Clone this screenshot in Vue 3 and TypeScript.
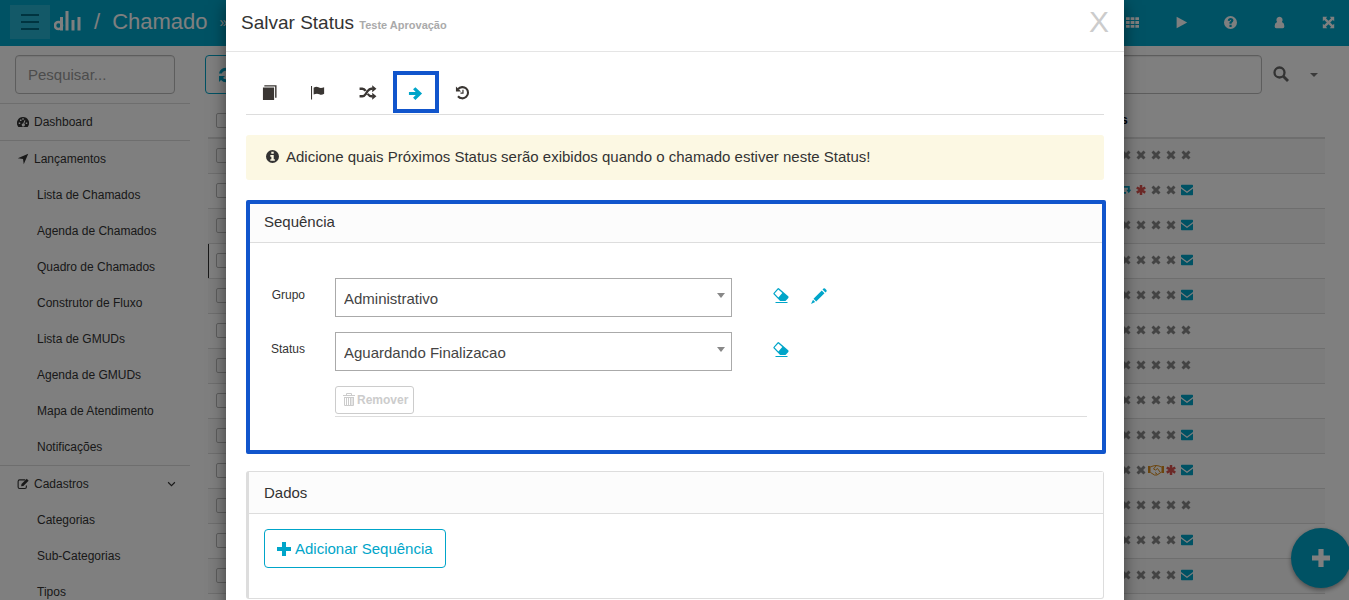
<script setup lang="ts">
import { ref } from 'vue'

type Mark = 'x' | 'star' | 'mail' | 'move' | 'shake'

interface MenuItem {
  label: string
  icon?: string
  open?: boolean
}

const menu: MenuItem[] = [
  { label: 'Dashboard', icon: 'dash' },
  { label: 'Lançamentos', icon: 'plane' },
  { label: 'Lista de Chamados' },
  { label: 'Agenda de Chamados' },
  { label: 'Quadro de Chamados' },
  { label: 'Construtor de Fluxo' },
  { label: 'Lista de GMUDs' },
  { label: 'Agenda de GMUDs' },
  { label: 'Mapa de Atendimento' },
  { label: 'Notificações' },
  { label: 'Cadastros', icon: 'edit', open: true },
  { label: 'Categorias' },
  { label: 'Sub-Categorias' },
  { label: 'Tipos' },
]

const none: Mark[] = ['x', 'x', 'x', 'x', 'x', 'x', 'x']
const mailed: Mark[] = ['x', 'x', 'x', 'x', 'x', 'x', 'mail']
const rows: Mark[][] = [
  none,
  ['x', 'x', 'move', 'star', 'x', 'x', 'mail'],
  mailed,
  mailed,
  mailed,
  none,
  none,
  mailed,
  mailed,
  ['x', 'x', 'x', 'x', 'shake', 'star', 'mail'],
  none,
  mailed,
  mailed,
  mailed,
]

const paths: Record<string, string> = {
  x: 'M4 .8 8 4.6 12 .8 15.200 4 11.400 8 15.200 12 12 15.200 8 11.400 4 15.200 .8 12 4.600 8 .8 4z',
  star: 'M6 0h4v4.500L13.800 2.200l2 3.500L12 8l3.800 2.300-2 3.500-3.800-2.300V16H6v-4.500L2.200 13.800l-2-3.500L4 8 .2 5.700l2-3.500L6 4.500z',
  mail: 'M0 2Q0 1 1 1H15Q16 1 16 2V4L8 10 0 4zM0 6 8 12 16 6V14Q16 15 15 15H1Q0 15 0 14z',
  move: 'M0 1.500H14V7.500H16.500L12.500 13 8.500 7.500H11V4.500H0zM0 11H8V14H0z',
  dash: 'M8 1.500A8 8 0 0 0 1.300 14Q1.600 14.500 2 14.500H14Q14.400 14.500 14.700 14A8 8 0 0 0 8 1.500M2.300 8.500h2v2h-2zM4 4.500h2v2H4zM7 3h2v2H7zM11.700 8.500h2v2h-2zM9.900 5.500l1.300.5-1.600 4.300a2 2 0 1 1-1.300-.4z',
  plane: 'M15 1 9 15 8 8 1 7z',
  book: 'M2.500 .3H15.500V13.500H14V1.600H2.500zM1 2.700H12.900V16H1z',
  flag: 'M0 .5H1.200V16H0zM3 2.500Q6 .5 8.500 2T15 2V9.500Q12 11.500 9.500 10T3 10.200z',
  arrow: 'M1 6.400H8.200L5.400 3.500 7.900 1.200 15 8 7.900 14.800 5.400 12.500 8.200 9.600H1z',
  info: 'M8 0a8 8 0 1 0 0 16A8 8 0 0 0 8 0M6.500 2.300h3v2.400h-3zM5.300 6.300h4.200v5h1.400v2H5.300v-2h1.300v-3H5.300z',
  plus: 'M5.700 0h4.600v5.700H16v4.600h-5.700V16H5.700v-5.700H0V5.700h5.700z',
  grid: 'M0 1.500h4.500v3.500H0zM5.700 1.500h4.600v3.500H5.700zM11.500 1.500H16v3.500h-4.500zM0 6.300h4.500v3.500H0zM5.700 6.300h4.600v3.500H5.700zM11.500 6.300H16v3.500h-4.500zM0 11h4.500v3.500H0zM5.700 11h4.600v3.500H5.700zM11.500 11H16v3.500h-4.500z',
  play: 'M2 1 15 8 2 15z',
  help: 'M8 0a8 8 0 1 0 0 16A8 8 0 0 0 8 0M4.600 5.800Q5 2.600 8.200 2.600 11.600 2.800 11.600 5.600 11.500 7.300 9.400 8.500V9.500H6.700V7.500L8.800 5.900Q8.900 4.900 8 4.900 7.200 5 7 6.300zM6.700 10.800h2.700v2.600H6.700z',
  user: 'M8 1a3.900 3.900 0 0 1 3 6.300Q14 8.500 14 12.500 14 15 12 15H4Q2 15 2 12.500 2 8.500 5 7.300A3.900 3.900 0 0 1 8 1',
  expand: 'M1 1H6.500L4.800 2.700 8 5.900 11.200 2.700 9.500 1H15V6.500L13.300 4.800 10.100 8 13.300 11.200 15 9.500V15H9.500L11.200 13.300 8 10.100 4.800 13.300 6.500 15H1V9.500L2.700 11.200 5.900 8 2.700 4.800 1 6.500z',
  refresh: 'M1 6.500A7 7 0 0 1 13 3L15 1V7H9L11 5A4.500 4.500 0 0 0 3.700 6.500zM15 9.500A7 7 0 0 1 3 13L1 15V9H7L5 11A4.500 4.500 0 0 0 12.300 9.500z',
  pencil: 'M11.500 1.500 12.500.5Q13.200 0 14 .6L15.400 2Q16 2.800 15.500 3.500L14.500 4.500zM10.800 2.500 13.500 5.200 5.200 13.500 2.500 10.800zM2 11.800 4.200 14 0 16z',
  eraser: 'M5.300 0Q5.800 0 6.200 .4L15.200 8.200Q16 9 15.300 10L13 12.500Q12.500 13 11.800 13H8Q7.200 13 6.600 12.400L.6 6.300Q0 5.600 .6 4.900L4.500 .4Q4.900 0 5.300 0M5.300 1.500 1.600 5.600 5.400 9.400 9.300 5z',
  line: 'M2.500 14H14.500V15H2.500z',
}

const tools = ['grid', 'play', 'help', 'user', 'expand']
const group = ref('Administrativo')
const status = ref('Aguardando Finalizacao')
const search = ref('')
const filter = ref('')
</script>

<template>
  <div class="app">
    <div class="page" inert>
      <header class="topbar">
        <button class="burger" aria-label="Menu"><span></span><span></span><span></span></button>
        <svg class="brand" viewBox="0 0 27 20" aria-label="Logo">
          <circle cx="4.500" cy="14.500" r="3.500" fill="none" stroke="#fff" stroke-width="2.600" />
          <path d="M7.500 6V19.500M13 0V19.500M19 9V19.500M25 6V19.500" fill="none" stroke="#fff" stroke-width="3" />
        </svg>
        <span class="slash">/</span>
        <h1>Chamado</h1>
        <span class="crumb">»</span>
        <nav class="tools">
          <button v-for="t in tools" :key="t" :aria-label="t">
            <svg viewBox="0 0 16 16"><path fill-rule="evenodd" :d="paths[t]" /></svg>
          </button>
        </nav>
      </header>
      <div class="columns">
        <aside>
          <input v-model="search" class="field" placeholder="Pesquisar..." aria-label="Pesquisar" />
          <nav class="menu">
            <a v-for="m in menu" :key="m.label" href="#" :class="{ head: m.icon }">
              <svg v-if="m.icon === 'edit'" viewBox="0 0 16 16">
                <path d="M11 2.500H3.500Q1.500 2.500 1.500 4.500V12Q1.500 14 3.500 14H10.500Q12.500 14 12.500 12V10" fill="none" stroke="currentColor" stroke-width="1.500" />
                <path d="M13 1 15.500 3.500 8.500 10.500 5.500 11 6 8z" />
              </svg>
              <svg v-else-if="m.icon" viewBox="0 0 16 16"><path fill-rule="evenodd" :d="paths[m.icon]" /></svg>
              <span>{{ m.label }}</span>
              <svg v-if="m.open" class="chev" viewBox="0 0 8 8"><path d="M1 2 4 5 7 2" fill="none" stroke="currentColor" stroke-width="1" /></svg>
            </a>
          </nav>
        </aside>
        <main>
          <div class="filters">
            <button class="reload" aria-label="Atualizar"><svg viewBox="0 0 16 16"><path :d="paths.refresh" /></svg></button>
            <input v-model="filter" class="field" aria-label="Filtro" />
            <button class="find" aria-label="Buscar">
              <svg viewBox="0 0 16 16"><circle cx="6.500" cy="6.500" r="5" fill="none" stroke="currentColor" stroke-width="2.300" /><path d="M10 10 15 15" stroke="currentColor" stroke-width="2.800" /></svg>
            </button>
            <button class="more" aria-label="Mais"><i class="caret"></i></button>
          </div>
          <table>
            <thead>
              <tr>
                <th><input type="checkbox" aria-label="Todos" /></th>
                <th class="marks">Status</th>
              </tr>
            </thead>
            <tbody>
              <tr v-for="(r, i) in rows" :key="i" :class="{ current: i === 3 }">
                <td><input type="checkbox" :aria-label="'Linha ' + (i + 1)" /></td>
                <td class="marks">
                  <div>
                    <template v-for="(k, j) in r" :key="j">
                      <svg v-if="k === 'shake'" class="shake" viewBox="0 0 16 12">
                        <path d="M0 2H2.500V9H0zM13.500 2H16V9H13.500z" />
                        <path d="M2.500 3 5 2 8 1.500 11 2 13.500 3M2.500 8.500 6.500 11H9L13.500 8M8 2 5.500 5 7.500 6 9.500 4.500 12 8M7 8.500 9 10" fill="none" stroke="currentColor" stroke-width="1" />
                      </svg>
                      <svg v-else :class="k" viewBox="0 0 16 16"><path :d="paths[k]" /></svg>
                    </template>
                  </div>
                </td>
              </tr>
            </tbody>
          </table>
        </main>
      </div>
      <button class="fab" aria-label="Novo"><svg viewBox="0 0 16 16"><path :d="paths.plus" /></svg></button>
    </div>

    <div class="backdrop">
      <section class="modal" role="dialog" aria-labelledby="dialog-title">
        <header class="modal-head">
          <h2 id="dialog-title">Salvar Status <small>Teste Aprovação</small></h2>
          <button class="close" aria-label="Fechar">X</button>
        </header>
        <div class="modal-body">
          <nav class="tabs">
            <button aria-label="Dados"><svg viewBox="0 0 16 16"><path :d="paths.book" /></svg></button>
            <button aria-label="Sinalização"><svg class="flag" viewBox="0 0 16 16"><path :d="paths.flag" /></svg></button>
            <button aria-label="Fluxo">
              <svg class="wide" viewBox="0 0 18 16">
                <path d="M0 4H3Q5 4 6.500 6.300M8.700 9.500Q10.500 12 12.500 12H14M0 12H3Q5 12 6.500 9.700L8.700 6.300Q10.500 4 12.500 4H14" fill="none" stroke="currentColor" stroke-width="2.500" />
                <path d="M13.500 .2 18 4 13.500 7.800zM13.500 8.200 18 12 13.500 15.800z" />
              </svg>
            </button>
            <button class="active" aria-label="Próximos"><svg viewBox="0 0 16 16"><path :d="paths.arrow" /></svg></button>
            <button aria-label="Histórico">
              <svg viewBox="0 0 16 16"><path d="M3.200 4.500A6 6 0 1 1 3.200 12" fill="none" stroke="currentColor" stroke-width="2.200" /><path d="M1 1.500V7H6.500z" /><path d="M8.500 5V8.700H5.800" fill="none" stroke="currentColor" stroke-width="1.300" /></svg>
            </button>
          </nav>

          <p class="notice">
            <svg viewBox="0 0 16 16"><path fill-rule="evenodd" :d="paths.info" /></svg>
            Adicione quais Próximos Status serão exibidos quando o chamado estiver neste Status!
          </p>

          <section class="panel marked">
            <h3>Sequência</h3>
            <div class="form">
              <div class="line">
                <label for="group">Grupo</label>
                <div class="pick">
                  <select id="group" v-model="group"><option>Administrativo</option></select>
                  <i class="caret"></i>
                </div>
                <button class="act" aria-label="Limpar grupo"><svg viewBox="0 0 16 16"><path fill-rule="evenodd" :d="paths.eraser" /><path :d="paths.line" /></svg></button>
                <button class="act" aria-label="Editar grupo"><svg viewBox="0 0 16 16"><path :d="paths.pencil" /></svg></button>
              </div>
              <div class="line">
                <label for="status">Status</label>
                <div class="pick">
                  <select id="status" v-model="status"><option>Aguardando Finalizacao</option></select>
                  <i class="caret"></i>
                </div>
                <button class="act" aria-label="Limpar status"><svg viewBox="0 0 16 16"><path fill-rule="evenodd" :d="paths.eraser" /><path :d="paths.line" /></svg></button>
              </div>
              <div class="remove">
                <button disabled>
                  <svg viewBox="0 0 12 14"><path d="M0 2.500H12M3.500 2.500V.5H8.500V2.500M1.500 4.500V12.500H10.500V4.500M3.500 5V12M5.500 5V12M7.500 5V12M9 5V12M1 4.500H11" fill="none" stroke="currentColor" stroke-width="1" /></svg>
                  Remover
                </button>
              </div>
            </div>
          </section>

          <section class="panel">
            <h3>Dados</h3>
            <div class="panel-body">
              <button class="add"><svg viewBox="0 0 16 16"><path :d="paths.plus" /></svg>Adicionar Sequência</button>
            </div>
          </section>
        </div>
      </section>
    </div>
  </div>
</template>

<style>
body {
  overflow: hidden;
}
</style>

<style scoped>
* {
  box-sizing: border-box;
}
.app {
  position: relative;
  height: 100vh;
  overflow: hidden;
  font: 12px/18px "Liberation Sans", Arial, sans-serif;
  color: #333;
}
button,
input,
select {
  font: inherit;
  color: inherit;
  margin: 0;
}
button {
  padding: 0;
  border: 0;
  background: none;
}
svg {
  width: 16px;
  height: 16px;
  fill: currentColor;
  flex: none;
  display: block;
}
h1,
h2,
h3,
p {
  margin: 0;
  font-weight: 400;
}
a {
  color: inherit;
  text-decoration: none;
}
.page {
  height: 100%;
  overflow: hidden;
  background: #fff;
}
.topbar {
  display: flex;
  align-items: center;
  height: 46px;
  padding: 0 14px 2px 10px;
  background: #00a5c9;
  color: #fff;
}
.burger {
  display: flex;
  flex-direction: column;
  align-items: center;
  justify-content: center;
  gap: 5px;
  width: 40px;
  height: 34px;
  background: #26b3d1;
}
.burger span {
  width: 18px;
  height: 2px;
  background: #006880;
}
.brand {
  width: 27px;
  height: 20px;
  margin: 0 0 3px 4px;
}
.slash {
  margin-left: 13px;
  font-size: 22px;
}
h1 {
  margin-left: 12px;
  font-size: 22px;
}
.crumb {
  margin-left: 12px;
  font-size: 14px;
}
.tools {
  display: flex;
  gap: 36px;
  margin-left: auto;
}
.tools svg {
  width: 13px;
  height: 13px;
}
.columns {
  display: flex;
}
aside {
  width: 190px;
  padding-top: 9px;
}
.field {
  height: 39px;
  padding: 0 12px;
  border: 1px solid #bbb;
  border-radius: 4px;
  background: #fff;
  font-size: 15px;
  box-shadow: inset 0 1px 1px rgba(0, 0, 0, .08);
}
.field::placeholder {
  color: #999;
  opacity: 1;
}
aside .field {
  display: block;
  width: 160px;
  margin: 0 15px 9px;
}
.menu a {
  display: flex;
  align-items: center;
  height: 36px;
  padding-left: 37px;
}
.menu a.head {
  height: 37px;
  gap: 5px;
  padding-left: 17px;
  border-top: 1px solid #ddd;
}
.menu svg {
  width: 12px;
  height: 12px;
}
.menu .chev {
  width: 9px;
  height: 9px;
  margin-left: auto;
  margin-right: 14px;
}
main {
  flex: 1;
  min-width: 0;
  padding: 9px 24px 0 15px;
}
.filters {
  display: flex;
  align-items: center;
}
.reload {
  width: 41px;
  height: 39px;
  padding-left: 12px;
  border: 1px solid #00a5c9;
  border-radius: 4px;
  color: #00a5c9;
}
.filters .field {
  flex: 1;
  min-width: 0;
  margin-left: 20px;
}
.find {
  width: 40px;
  padding: 0 0 2px 11px;
  color: #666;
}
.more {
  width: 23px;
  padding-left: 8px;
}
.caret {
  display: block;
  width: 0;
  border: 4px solid transparent;
  border-top-color: #777;
  border-bottom: 0;
}
table {
  width: calc(100% - 3px);
  margin: 9px 0 0 3px;
  border-collapse: collapse;
}
th,
td {
  height: 35px;
  padding: 0 0 0 8px;
  border-bottom: 1px solid #ddd;
  text-align: left;
  vertical-align: middle;
}
th {
  border-bottom-width: 2px;
  color: #000;
}
th.marks,
td.marks {
  width: 242px;
}
tbody tr:nth-child(odd) {
  background: #f9f9f9;
}
tr.current td:first-child {
  box-shadow: inset 1px 0 #333;
}
td input,
th input {
  display: block;
  width: 15px;
  height: 15px;
  appearance: none;
  border: 1px solid #bbb;
  border-radius: 2px;
}
td.marks div {
  display: flex;
  align-items: center;
  gap: 5px;
  padding-bottom: 2px;
  color: #888;
}
td.marks svg {
  width: 10px;
  height: 10px;
}
td.marks .star {
  color: #d9534f;
}
td.marks .mail {
  width: 12px;
  height: 12px;
  color: #00a5c9;
}
td.marks .move {
  color: #00a5c9;
}
td.marks .shake {
  width: 16px;
  height: 12px;
  margin: 0 -3px;
  color: #d98a1a;
}
.fab {
  position: absolute;
  right: -2px;
  bottom: 12px;
  display: grid;
  place-items: center;
  width: 60px;
  height: 60px;
  border-radius: 50%;
  background: #00a5c9;
  color: #fff;
  box-shadow: 0 2px 5px rgba(0, 0, 0, .4);
}
.fab svg {
  width: 18px;
  height: 18px;
}
.backdrop {
  position: absolute;
  inset: 0;
  padding: 0 225px 0 226px;
  background: rgba(0, 0, 0, .5);
}
.modal {
  min-height: 100%;
  background: #fff;
  box-shadow: 0 5px 15px rgba(0, 0, 0, .5);
}
.modal-head {
  display: flex;
  align-items: center;
  justify-content: space-between;
  height: 52px;
  padding: 0 15px 7px;
  border-bottom: 1px solid #e5e5e5;
}
h2 {
  padding-top: 3px;
  font-size: 19px;
  line-height: 24px;
}
h2 small {
  font-size: 11px;
  font-weight: 700;
  color: #aaa;
}
.close {
  font-size: 30px;
  line-height: 30px;
  color: #ccc;
}
.modal-body {
  padding: 19px 20px;
}
.tabs {
  display: flex;
  height: 44px;
  border-bottom: 1px solid #ddd;
}
.tabs button {
  display: grid;
  place-items: center;
  width: 46px;
  height: 42px;
  color: #3a3633;
}
.tabs svg {
  width: 15px;
  height: 15px;
}
.tabs .flag {
  width: 14px;
}
.tabs .wide {
  width: 18px;
}
.tabs button:nth-child(2) {
  width: 51px;
}
.tabs button:nth-child(3) {
  width: 50px;
}
.tabs .active {
  padding: 2px 2px 0 0;
  border: 4px solid #1155cc;
  color: #00a5c9;
}
.notice {
  display: flex;
  align-items: center;
  gap: 7px;
  height: 45px;
  margin-top: 20px;
  padding: 0 20px 2px;
  border-radius: 3px;
  background: #fcf8e3;
  font-size: 15px;
}
.notice svg {
  width: 13px;
  height: 13px;
}
.panel {
  margin-top: 17px;
  border: 1px solid #ddd;
  border-left-width: 3px;
  border-radius: 3px;
}
.panel h3 {
  height: 42px;
  padding: 0 15px;
  border-bottom: 1px solid #ddd;
  background: #fcfcfc;
  font-size: 15px;
  line-height: 42px;
}
.panel.marked {
  margin: 20px -2px 0 0;
  border: 4px solid #1155cc;
  border-radius: 2px;
}
.marked h3 {
  height: 39px;
  padding: 0 14px;
  line-height: 36px;
}
.form {
  display: flex;
  flex-direction: column;
  gap: 15px;
  padding: 35px 15px 33px;
}
.line {
  display: flex;
}
.line label {
  width: 40px;
  margin-right: 30px;
  line-height: 34px;
  text-align: right;
}
.pick {
  position: relative;
  width: 397px;
  margin-right: 34px;
}
.pick select {
  display: block;
  width: 100%;
  height: 39px;
  padding: 2px 8px 0;
  appearance: none;
  border: 1px solid #aaa;
  border-radius: 0;
  background: #fff;
  color: #444;
  font-size: 15px;
}
.pick .caret {
  position: absolute;
  top: 15px;
  right: 7px;
  border-width: 5px 4px 0;
  border-top-color: #888;
}
.act {
  display: grid;
  place-items: center;
  width: 30px;
  height: 36px;
  margin-right: 8px;
  color: #00a5c9;
}
.remove {
  margin-left: 70px;
  padding-bottom: 2px;
  border-bottom: 1px solid #ddd;
}
.remove button {
  display: flex;
  align-items: center;
  gap: 2px;
  height: 28px;
  padding: 0 5px 0 7px;
  border: 1px solid #ccc;
  border-radius: 3px;
  color: #ccc;
  font-weight: 700;
}
.remove svg {
  width: 12px;
  height: 14px;
}
.panel-body {
  padding: 15px 15px 30px;
}
.add {
  display: flex;
  align-items: center;
  gap: 4px;
  height: 39px;
  padding: 0 12px;
  border: 1px solid #00a5c9;
  border-radius: 4px;
  color: #00a5c9;
  font-size: 15px;
}
.add svg {
  width: 14px;
  height: 14px;
}
</style>
